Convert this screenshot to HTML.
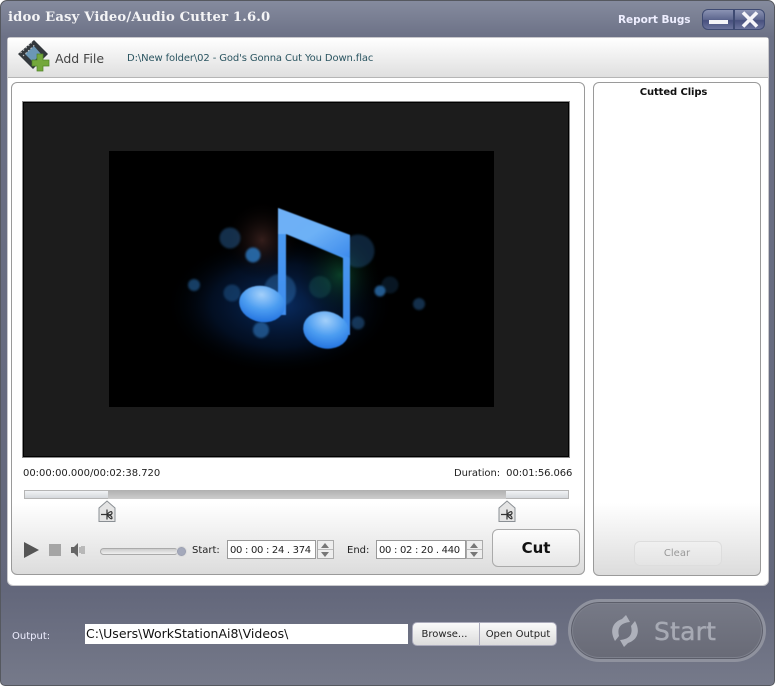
<!DOCTYPE html>
<html><head><meta charset="utf-8"><style>
*{box-sizing:border-box;margin:0;padding:0}
html,body{width:775px;height:686px;overflow:hidden;background:#fff}
body{position:relative;font-family:"DejaVu Sans","Liberation Sans",sans-serif;font-size:10px;color:#222}
.a{position:absolute;white-space:nowrap}
.panel{position:absolute;border:1px solid #9a9a9a;border-radius:6px;background:linear-gradient(#fff 0,#fff 420px,#dcdcdc 100%)}
.spin{position:absolute;width:17px;height:19px;border:1px solid #aaa;background:#eee}
.spin:before{content:"";position:absolute;left:3px;top:2px;border:4px solid transparent;border-top:0;border-bottom:5px solid #777}
.spin:after{content:"";position:absolute;left:3px;top:11px;border:4px solid transparent;border-bottom:0;border-top:5px solid #777}
.spin i{position:absolute;left:0;right:0;top:8px;height:1px;background:#bbb}
.tb{position:absolute;height:19px;background:#fff;border:1px solid #999;font-size:10px;line-height:19px;padding-left:2px;color:#222;white-space:nowrap;letter-spacing:-.3px}
</style></head><body>
<div class="a" style="left:0;top:0;width:775px;height:686px;border:1px solid #55585f;border-radius:7px 7px 5px 5px;background:linear-gradient(#858b9e 0,#6c7186 36px,#63677b 590px,#767a8a 686px)"></div>
<div class="a" style="left:8px;top:10px;font:bold 13.2px 'DejaVu Serif',serif;color:#f4f4f6;letter-spacing:.15px">idoo Easy Video/Audio Cutter 1.6.0</div>
<div class="a" style="left:618px;top:14px;font-weight:bold;font-size:10.5px;color:#eef;letter-spacing:-.05px">Report Bugs</div>
<div class="a" style="left:702px;top:9px;width:32px;height:21px;border:1px solid #3e4a72;border-radius:6px 0 0 6px;background:linear-gradient(#8b93b3,#5e678f 50%,#47507e 55%,#6b739c)"></div>
<div class="a" style="left:734px;top:9px;width:31px;height:21px;border:1px solid #3e4a72;border-radius:0 6px 6px 0;background:linear-gradient(#8b93b3,#5e678f 50%,#47507e 55%,#6b739c)"></div>
<div class="a" style="left:709px;top:20px;width:19px;height:4px;background:#f4f4f8"></div>
<svg class="a" style="left:741px;top:11px" width="18" height="17"><path d="M2 1.5L16 15.5M16 1.5L2 15.5" stroke="#f6f6fa" stroke-width="3.6"/></svg>

<div class="a" style="left:7px;top:37px;width:762px;height:549px;background:#fff;border:1px solid #c8c8cc;border-radius:3px 3px 6px 6px"></div>
<div class="a" style="left:8px;top:38px;width:760px;height:40px;background:linear-gradient(#fff,#dfdfdf);border-bottom:1px solid #b5b5b5"></div>
<svg class="a" style="left:17px;top:39px" width="36" height="34" viewBox="0 0 36 34">
<path d="M1 15L17 1L31 15L16 30Z" fill="#33383c"/>
<path d="M8 15L17 7L24 15L16 23Z" fill="#6b97b5"/>
<path d="M3.500 14L15.500 3M6 17L18 5.500" stroke="#ccc" stroke-width="1" stroke-dasharray="1.500 2"/>
<path d="M21 16h6v6h6v6h-6v5h-6v-5h-5v-6h5z" fill="#74a83c" stroke="#4f8426" stroke-width=".7" transform="translate(-1 -1)"/>
</svg>
<div class="a" style="left:55px;top:51px;font-size:12.500px;color:#444">Add File</div>
<div class="a" style="left:127px;top:53px;font-size:10px;color:#2b5561;letter-spacing:-.12px">D:\New folder\02 - God's Gonna Cut You Down.flac</div>

<div class="panel" style="left:11px;top:82px;width:574px;height:493px"></div>
<div class="panel" style="left:593px;top:82px;width:168px;height:494px"></div>
<div class="a" style="top:87px;text-align:center;font-weight:bold;font-size:10px;color:#111;letter-spacing:-.1px;left:594px;width:159px">Cutted Clips</div>

<div class="a" style="left:22px;top:101px;width:548px;height:357px;background:#1c1c1c;border:1px solid #8a8a8a;box-shadow:inset 0 0 0 1px #000"></div>
<svg class="a" style="left:109px;top:151px" width="385" height="256" viewBox="109 151 385 256">
<defs>
<filter id="b1" x="-20%" y="-20%" width="140%" height="140%"><feGaussianBlur stdDeviation="1"/></filter>
<filter id="b2" x="-5%" y="-5%" width="110%" height="110%"><feGaussianBlur stdDeviation=".5"/></filter>
<radialGradient id="g1" cx="50%" cy="50%" r="50%"><stop offset="0" stop-color="#0d3f8c" stop-opacity=".7"/><stop offset=".6" stop-color="#06224f" stop-opacity=".42"/><stop offset="1" stop-color="#000" stop-opacity="0"/></radialGradient>
<radialGradient id="g2"><stop offset="0" stop-color="#0f5a30" stop-opacity=".65"/><stop offset="1" stop-color="#000" stop-opacity="0"/></radialGradient>
<radialGradient id="g3"><stop offset="0" stop-color="#4a2a26" stop-opacity=".7"/><stop offset="1" stop-color="#000" stop-opacity="0"/></radialGradient>
<linearGradient id="n" x1="0" y1="0" x2="1" y2="1"><stop offset="0" stop-color="#6fb0f6"/><stop offset=".5" stop-color="#6db1f6"/><stop offset="1" stop-color="#3c8aec"/></linearGradient>
<radialGradient id="h" cx="45%" cy="25%" r="75%"><stop offset="0" stop-color="#a4d0fa"/><stop offset=".55" stop-color="#4c9df1"/><stop offset="1" stop-color="#2575e0"/></radialGradient>
<linearGradient id="s" x1="0" y1="0" x2="0" y2="1"><stop offset="0" stop-color="#4e9df3"/><stop offset="1" stop-color="#3c8aec"/></linearGradient>
</defs>
<rect x="109" y="151" width="385" height="256" fill="#000"/>
<ellipse cx="280" cy="305" rx="115" ry="70" fill="url(#g1)"/>
<ellipse cx="262" cy="240" rx="38" ry="40" fill="url(#g3)"/>
<ellipse cx="340" cy="275" rx="42" ry="45" fill="url(#g2)"/>
<g fill="#2a6fb0" filter="url(#b1)">
<circle cx="230" cy="238" r="10.500" opacity=".42"/>
<circle cx="253" cy="255" r="7.500" opacity=".9"/>
<circle cx="194" cy="285" r="6" opacity=".55"/>
<circle cx="232" cy="293" r="8.500" opacity=".38"/>
<circle cx="280" cy="290" r="16" opacity=".45"/>
<circle cx="320" cy="287" r="11" fill="#2b8a7a" opacity=".22"/>
<circle cx="358" cy="251" r="16.500" opacity=".32"/>
<circle cx="380" cy="291" r="5.500" opacity=".8"/>
<circle cx="390" cy="285" r="8.500" opacity=".2"/>
<circle cx="419" cy="304" r="6" opacity=".42"/>
<circle cx="358" cy="323" r="6.500" opacity=".45"/>
<circle cx="261" cy="330" r="8" opacity=".65"/>
</g>
<g filter="url(#b2)">
<path d="M278 208L350 235V335H343V258L286 234V315H278Z" fill="url(#s)"/>
<path d="M278 208L350 235V258L286 234L278 234Z" fill="url(#n)"/>
<ellipse cx="262" cy="304" rx="23" ry="18" transform="rotate(12 262 304)" fill="url(#h)"/>
<ellipse cx="326" cy="330" rx="23" ry="18.500" transform="rotate(12 326 330)" fill="url(#h)"/>
</g>
</svg>

<div class="a" style="left:23px;top:468px;font-size:10px;letter-spacing:-.02px">00:00:00.000/00:02:38.720</div>
<div class="a" style="left:454px;top:468px;font-size:10px;letter-spacing:-.09px">Duration:&nbsp; 00:01:56.066</div>

<div class="a" style="left:24px;top:490px;width:545px;height:9px;background:linear-gradient(#f1f3f5,#d5d8dc);border:1px solid #b5b5b5"></div>
<div class="a" style="left:108px;top:490px;width:398px;height:9px;background:linear-gradient(#b0b0b0,#cdcdcd)"></div>
<svg class="a" style="left:98px;top:500px" width="18" height="23"><path d="M1 8L9 1L17 8V21.500H1Z" fill="#e4e4e4" stroke="#8a8f94"/><path d="M3 14.500H9M9 9.500V19.500M9 14.500C12 11 14 11 14 13S11 15 9 14.500M9 14.500C12 15 14 16 14 18S11 18 9 14.500" stroke="#333" fill="none" stroke-width="1.200"/></svg>
<svg class="a" style="left:498px;top:500px" width="18" height="23"><path d="M1 8L9 1L17 8V21.500H1Z" fill="#e4e4e4" stroke="#8a8f94"/><path d="M3 14.500H9M9 9.500V19.500M9 14.500C12 11 14 11 14 13S11 15 9 14.500M9 14.500C12 15 14 16 14 18S11 18 9 14.500" stroke="#333" fill="none" stroke-width="1.200"/></svg>

<svg class="a" style="left:24px;top:542px" width="64" height="18"><path d="M0 0L15 8L0 16Z" fill="#555"/><rect x="25" y="2" width="12" height="12" fill="#a5a5a5"/><path d="M47 5H50L54 1V15L50 11H47Z" fill="#666"/><path d="M56 5V11M58 4V12M60 4V12" stroke="#888" stroke-width="1"/></svg>
<div class="a" style="left:100px;top:548px;width:78px;height:7px;border:1px solid #aaa;border-radius:4px;background:linear-gradient(#ccc,#f0f0f0)"></div>
<div class="a" style="left:176px;top:546px;width:11px;height:11px;border-radius:50%;border:1px solid #ddd;background:radial-gradient(#a4a9bb 50%,#7f8496)"></div>
<div class="a" style="left:192px;top:545px;font-size:10px">Start:</div>
<div class="tb" style="left:227px;top:540px;width:89px">00 : 00 : 24 . 374</div>
<div class="spin" style="left:317px;top:540px"><i></i></div>
<div class="a" style="left:347px;top:545px;font-size:10px">End:</div>
<div class="tb" style="left:376px;top:540px;width:90px">00 : 02 : 20 . 440</div>
<div class="spin" style="left:466px;top:540px"><i></i></div>
<div class="a" style="left:492px;top:529px;width:88px;height:38px;border:1px solid #aaa;border-radius:6px;background:linear-gradient(#fdfdfd,#e6e6e6);text-align:center;font:bold 15px/36px 'DejaVu Sans',sans-serif;color:#111">Cut</div>
<div class="a" style="left:634px;top:541px;width:88px;height:25px;border:1px solid #ddd;border-radius:6px;background:linear-gradient(#f0f0f0,#e4e4e4);text-align:center;font-size:10px;line-height:24px;color:#999;padding-right:2px">Clear</div>

<div class="a" style="left:12px;top:631px;font-size:10px;color:#eef">Output:</div>
<div class="a" style="left:85px;top:624px;width:323px;height:20px;background:#fff;font-size:12.5px;line-height:19px;padding-left:1px;color:#111">C:\Users\WorkStationAi8\Videos\</div>
<div class="a" style="left:412px;top:622px;width:68px;height:24px;border:1px solid #aab;border-radius:5px 0 0 5px;background:linear-gradient(#fafafa,#dcdcdc);text-align:center;font-size:10px;line-height:23px;color:#222;padding-right:3px">Browse...</div>
<div class="a" style="left:479px;top:622px;width:78px;height:24px;border:1px solid #aab;border-radius:0 5px 5px 0;background:linear-gradient(#fafafa,#dcdcdc);text-align:center;font-size:10px;line-height:23px;color:#222">Open Output</div>

<div class="a" style="left:568px;top:599px;width:198px;height:63px;border-radius:32px;border:3px solid #8f929e;background:linear-gradient(#777a87,#686a76);box-shadow:inset 0 0 0 1px #5c5e6a,inset 0 0 0 2px #7d808c"></div>
<svg class="a" style="left:610px;top:614px" width="30" height="34" viewBox="0 0 30 34"><path d="M16 1L20 8C10 9 7 14 9 22L5 27C-1 16 3 8 12 5ZM14 33L10 26C20 25 23 20 21 12L25 7C31 18 27 26 18 29Z" fill="#aeb1bb"/></svg>
<div class="a" style="left:654px;top:617px;font-size:25px;color:#a7aab4;letter-spacing:.2px;-webkit-text-stroke:.4px #a7aab4">Start</div>
</body></html>
